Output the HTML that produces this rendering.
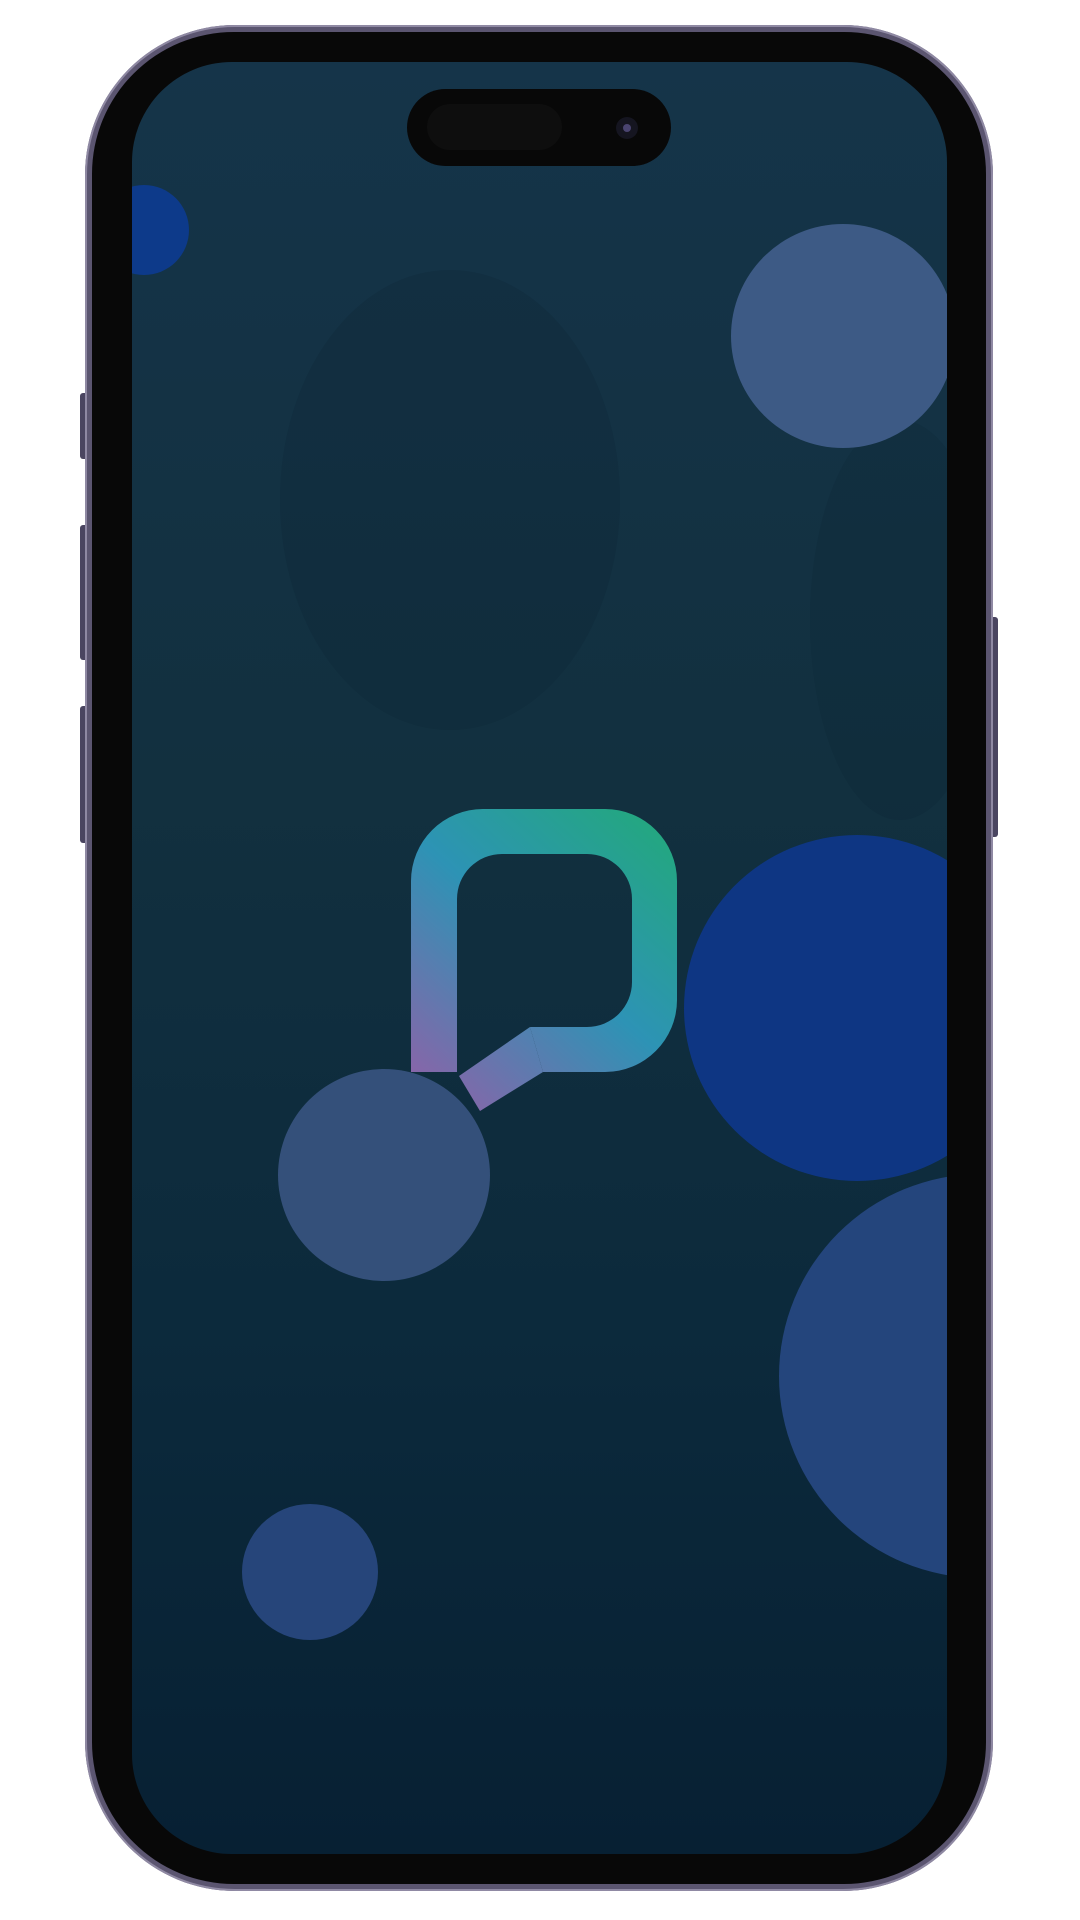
<!DOCTYPE html>
<html><head><meta charset="utf-8"><style>
html,body{margin:0;padding:0;background:#fff;width:1080px;height:1920px;overflow:hidden}
.abs{position:absolute}
</style></head><body>
<div class="abs" style="left:80px;top:393px;width:8px;height:66px;background:#4a4560;border-radius:3px"></div>
<div class="abs" style="left:80px;top:525px;width:8px;height:135px;background:#4a4560;border-radius:3px"></div>
<div class="abs" style="left:80px;top:706px;width:8px;height:137px;background:#4a4560;border-radius:3px"></div>
<div class="abs" style="left:990px;top:617px;width:8px;height:220px;background:#4a4560;border-radius:3px"></div>
<div class="abs" style="left:85px;top:25px;width:908px;height:1866px;border-radius:150px;background:#5b5570;box-shadow:inset 0 0 0 2px #8f89a3"></div>
<div class="abs" style="left:92px;top:32px;width:894px;height:1852px;border-radius:142px;background:#080808"></div>
<div class="abs" style="left:132px;top:62px;width:815px;height:1792px;border-radius:100px;overflow:hidden;background:linear-gradient(180deg,#153449 0%,#12303f 40%,#0c2a3c 70%,#072033 100%)">
<svg width="815" height="1792" viewBox="132 62 815 1792" style="position:absolute;left:0;top:0">
<ellipse cx="450" cy="500" rx="170" ry="230" fill="#0a2433" opacity="0.25"/>
<ellipse cx="900" cy="620" rx="90" ry="200" fill="#0a2433" opacity="0.2"/>
<circle cx="144" cy="230" r="45" fill="#0d3a8a"/>
<circle cx="843" cy="336" r="112" fill="#3d5a85"/>
<circle cx="857" cy="1008" r="173" fill="#0e3683"/>
<circle cx="384" cy="1175" r="106" fill="#34507a"/>
<circle cx="981" cy="1376" r="202" fill="#24457c"/>
<circle cx="310" cy="1572" r="68" fill="#26457a"/>
<defs><linearGradient id="g" gradientUnits="userSpaceOnUse" x1="420" y1="1100" x2="677" y2="809">
<stop offset="0" stop-color="#8e62a8"/><stop offset="0.5" stop-color="#2d93b5"/><stop offset="1" stop-color="#22aa78"/></linearGradient></defs>
<path fill="url(#g)" d="M411,1072 V881 A72,72 0 0 1 483,809 H605 A72,72 0 0 1 677,881 V1000 A72,72 0 0 1 605,1072 H543 L530,1027 H587 A45,45 0 0 0 632,982 V899 A45,45 0 0 0 587,854 H502 A45,45 0 0 0 457,899 V1072 Z"/>
<path fill="url(#g)" d="M530,1027 L543,1072 L480,1111 L459,1076 Z"/>
</svg>
</div>
<div class="abs" style="left:407px;top:89px;width:264px;height:77px;border-radius:39px;background:#080808"></div>
<div class="abs" style="left:427px;top:104px;width:135px;height:46px;border-radius:23px;background:#0e0e0e"></div>
<div class="abs" style="left:616px;top:117px;width:22px;height:22px;border-radius:50%;background:#151520"></div>
<div class="abs" style="left:623px;top:124px;width:8px;height:8px;border-radius:50%;background:#4a4470"></div>
</body></html>
